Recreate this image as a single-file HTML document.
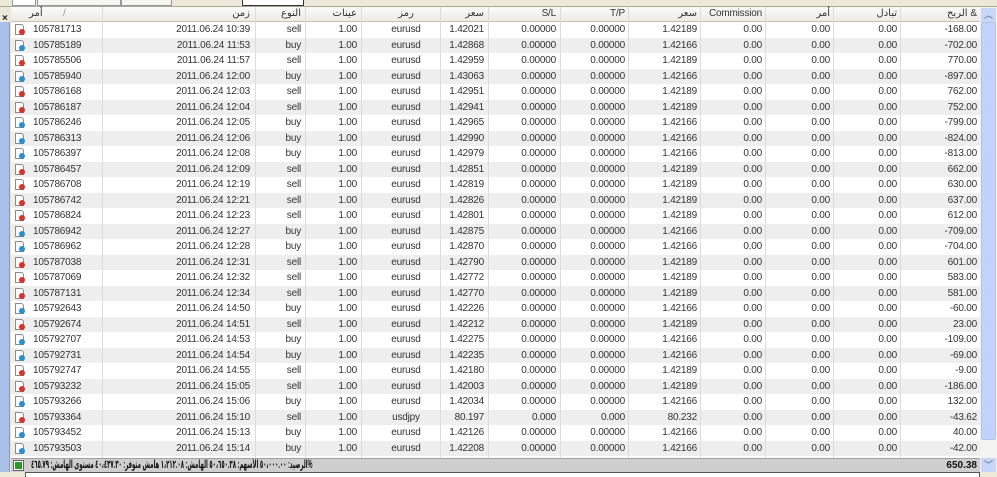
<!DOCTYPE html>
<html><head><meta charset="utf-8">
<style>
*{margin:0;padding:0;box-sizing:border-box}
body{width:997px;height:477px;overflow:hidden;background:#ece9d8;font-family:"Liberation Sans","DejaVu Sans",sans-serif;font-size:10px;color:#333;position:relative}
.top{position:absolute;left:0;top:0;width:997px;height:7px;background:#ece9d8;border-bottom:1px solid #aca899}
.tab{position:absolute;top:0;height:6px;border:1px solid #919b9c;border-top:none;background:#f7f6f0}
.side{position:absolute;left:0;top:7px;width:11px;height:465px;background:#ece9d8}
.bar{position:absolute;left:0;top:22px;width:10px;height:450px;background:#a9c0e8;border-right:1px solid #7f9db9}
.x{position:absolute;left:2px;top:6px;font-size:10px;font-weight:bold;color:#222}
.hdr{position:absolute;left:11px;top:7px;width:969px;height:15px;background:linear-gradient(#fbfbf8,#ecebe4);border-bottom:1px solid #c5c2b2}
.grid{position:absolute;left:11px;top:22px;width:969px;height:436px;background:#fff;overflow:hidden}
.r{position:absolute;left:0;width:969px;height:15.5px}
.r.g{background:#eeeeee}
.r span,.hdr span{position:absolute;top:2px;white-space:nowrap;line-height:12px;letter-spacing:-0.2px}
.hdr span{top:1px}
.vl{position:absolute;top:7px;width:1px;height:451px;background:#dcdcdc}
.a{left:22px}
.c1{right:730px}.c2{right:679px}.c3{right:623px}.c4{left:380px;width:30px;text-align:center}
.c5{right:496px}.c6{right:424px}.c7{right:355px}.c8{right:283px}.c9{right:218px}.c10{right:150px}.c11{right:83px}.c12{right:3px}
.ic{position:absolute;left:4px;top:2px;width:9px;height:11px;border:1px solid #8a8a8a;background:#fff;border-radius:0 3px 0 0}
.ic i{position:absolute;left:3px;top:4px;width:6px;height:6px;border-radius:50%}
.s i{background:#d8322a}.b i{background:#2b8fcf}
.sb{position:absolute;left:980px;top:7px;width:17px;height:465px;background:#f3f3ef}
.th{position:absolute;left:981px;top:22px;width:15px;height:418px;background:#c1d3fb;border:1px solid #b0c4ee;border-radius:2px}
.ar{position:absolute;left:981px;width:15px;height:14px;background:#c8d7f8;color:#4d6185;font-size:9px;text-align:center;line-height:14px}
.sum{position:absolute;left:11px;top:458px;width:969px;height:14px;background:#cfcfcf;border-top:1px solid #a0a0a0;font-weight:bold;color:#111}
.bot{position:absolute;left:25px;top:472px;width:955px;height:5px;background:#fff;border:1px solid #555;border-bottom:none}
</style></head><body>
<div class="top">
<div class="tab" style="left:12px;width:24px;background:#fff"></div>
<div class="tab" style="left:37px;width:84px"></div>
<div class="tab" style="left:121px;width:51px"></div>
<div class="tab" style="left:242px;width:62px;background:#fff;border-color:#333"></div>
</div>
<div class="side"><div class="x">×</div></div>
<div class="bar"></div>
<div class="grid">
<div class="r"><div class="ic s"><i></i></div><span class="a">105781713</span><span class="c1">2011.06.24 10:39</span><span class="c2">sell</span><span class="c3">1.00</span><span class="c4">eurusd</span><span class="c5">1.42021</span><span class="c6">0.00000</span><span class="c7">0.00000</span><span class="c8">1.42189</span><span class="c9">0.00</span><span class="c10">0.00</span><span class="c11">0.00</span><span class="c12">-168.00</span></div>
<div class="r g" style="top:15.5px"><div class="ic b"><i></i></div><span class="a">105785189</span><span class="c1">2011.06.24 11:53</span><span class="c2">buy</span><span class="c3">1.00</span><span class="c4">eurusd</span><span class="c5">1.42868</span><span class="c6">0.00000</span><span class="c7">0.00000</span><span class="c8">1.42166</span><span class="c9">0.00</span><span class="c10">0.00</span><span class="c11">0.00</span><span class="c12">-702.00</span></div>
<div class="r" style="top:31px"><div class="ic s"><i></i></div><span class="a">105785506</span><span class="c1">2011.06.24 11:57</span><span class="c2">sell</span><span class="c3">1.00</span><span class="c4">eurusd</span><span class="c5">1.42959</span><span class="c6">0.00000</span><span class="c7">0.00000</span><span class="c8">1.42189</span><span class="c9">0.00</span><span class="c10">0.00</span><span class="c11">0.00</span><span class="c12">770.00</span></div>
<div class="r g" style="top:46.5px"><div class="ic b"><i></i></div><span class="a">105785940</span><span class="c1">2011.06.24 12:00</span><span class="c2">buy</span><span class="c3">1.00</span><span class="c4">eurusd</span><span class="c5">1.43063</span><span class="c6">0.00000</span><span class="c7">0.00000</span><span class="c8">1.42166</span><span class="c9">0.00</span><span class="c10">0.00</span><span class="c11">0.00</span><span class="c12">-897.00</span></div>
<div class="r" style="top:62px"><div class="ic s"><i></i></div><span class="a">105786168</span><span class="c1">2011.06.24 12:03</span><span class="c2">sell</span><span class="c3">1.00</span><span class="c4">eurusd</span><span class="c5">1.42951</span><span class="c6">0.00000</span><span class="c7">0.00000</span><span class="c8">1.42189</span><span class="c9">0.00</span><span class="c10">0.00</span><span class="c11">0.00</span><span class="c12">762.00</span></div>
<div class="r g" style="top:77.5px"><div class="ic s"><i></i></div><span class="a">105786187</span><span class="c1">2011.06.24 12:04</span><span class="c2">sell</span><span class="c3">1.00</span><span class="c4">eurusd</span><span class="c5">1.42941</span><span class="c6">0.00000</span><span class="c7">0.00000</span><span class="c8">1.42189</span><span class="c9">0.00</span><span class="c10">0.00</span><span class="c11">0.00</span><span class="c12">752.00</span></div>
<div class="r" style="top:93px"><div class="ic b"><i></i></div><span class="a">105786246</span><span class="c1">2011.06.24 12:05</span><span class="c2">buy</span><span class="c3">1.00</span><span class="c4">eurusd</span><span class="c5">1.42965</span><span class="c6">0.00000</span><span class="c7">0.00000</span><span class="c8">1.42166</span><span class="c9">0.00</span><span class="c10">0.00</span><span class="c11">0.00</span><span class="c12">-799.00</span></div>
<div class="r g" style="top:108.5px"><div class="ic b"><i></i></div><span class="a">105786313</span><span class="c1">2011.06.24 12:06</span><span class="c2">buy</span><span class="c3">1.00</span><span class="c4">eurusd</span><span class="c5">1.42990</span><span class="c6">0.00000</span><span class="c7">0.00000</span><span class="c8">1.42166</span><span class="c9">0.00</span><span class="c10">0.00</span><span class="c11">0.00</span><span class="c12">-824.00</span></div>
<div class="r" style="top:124px"><div class="ic b"><i></i></div><span class="a">105786397</span><span class="c1">2011.06.24 12:08</span><span class="c2">buy</span><span class="c3">1.00</span><span class="c4">eurusd</span><span class="c5">1.42979</span><span class="c6">0.00000</span><span class="c7">0.00000</span><span class="c8">1.42166</span><span class="c9">0.00</span><span class="c10">0.00</span><span class="c11">0.00</span><span class="c12">-813.00</span></div>
<div class="r g" style="top:139.5px"><div class="ic s"><i></i></div><span class="a">105786457</span><span class="c1">2011.06.24 12:09</span><span class="c2">sell</span><span class="c3">1.00</span><span class="c4">eurusd</span><span class="c5">1.42851</span><span class="c6">0.00000</span><span class="c7">0.00000</span><span class="c8">1.42189</span><span class="c9">0.00</span><span class="c10">0.00</span><span class="c11">0.00</span><span class="c12">662.00</span></div>
<div class="r" style="top:155px"><div class="ic s"><i></i></div><span class="a">105786708</span><span class="c1">2011.06.24 12:19</span><span class="c2">sell</span><span class="c3">1.00</span><span class="c4">eurusd</span><span class="c5">1.42819</span><span class="c6">0.00000</span><span class="c7">0.00000</span><span class="c8">1.42189</span><span class="c9">0.00</span><span class="c10">0.00</span><span class="c11">0.00</span><span class="c12">630.00</span></div>
<div class="r g" style="top:170.5px"><div class="ic s"><i></i></div><span class="a">105786742</span><span class="c1">2011.06.24 12:21</span><span class="c2">sell</span><span class="c3">1.00</span><span class="c4">eurusd</span><span class="c5">1.42826</span><span class="c6">0.00000</span><span class="c7">0.00000</span><span class="c8">1.42189</span><span class="c9">0.00</span><span class="c10">0.00</span><span class="c11">0.00</span><span class="c12">637.00</span></div>
<div class="r" style="top:186px"><div class="ic s"><i></i></div><span class="a">105786824</span><span class="c1">2011.06.24 12:23</span><span class="c2">sell</span><span class="c3">1.00</span><span class="c4">eurusd</span><span class="c5">1.42801</span><span class="c6">0.00000</span><span class="c7">0.00000</span><span class="c8">1.42189</span><span class="c9">0.00</span><span class="c10">0.00</span><span class="c11">0.00</span><span class="c12">612.00</span></div>
<div class="r g" style="top:201.5px"><div class="ic b"><i></i></div><span class="a">105786942</span><span class="c1">2011.06.24 12:27</span><span class="c2">buy</span><span class="c3">1.00</span><span class="c4">eurusd</span><span class="c5">1.42875</span><span class="c6">0.00000</span><span class="c7">0.00000</span><span class="c8">1.42166</span><span class="c9">0.00</span><span class="c10">0.00</span><span class="c11">0.00</span><span class="c12">-709.00</span></div>
<div class="r" style="top:217px"><div class="ic b"><i></i></div><span class="a">105786962</span><span class="c1">2011.06.24 12:28</span><span class="c2">buy</span><span class="c3">1.00</span><span class="c4">eurusd</span><span class="c5">1.42870</span><span class="c6">0.00000</span><span class="c7">0.00000</span><span class="c8">1.42166</span><span class="c9">0.00</span><span class="c10">0.00</span><span class="c11">0.00</span><span class="c12">-704.00</span></div>
<div class="r g" style="top:232.5px"><div class="ic s"><i></i></div><span class="a">105787038</span><span class="c1">2011.06.24 12:31</span><span class="c2">sell</span><span class="c3">1.00</span><span class="c4">eurusd</span><span class="c5">1.42790</span><span class="c6">0.00000</span><span class="c7">0.00000</span><span class="c8">1.42189</span><span class="c9">0.00</span><span class="c10">0.00</span><span class="c11">0.00</span><span class="c12">601.00</span></div>
<div class="r" style="top:248px"><div class="ic s"><i></i></div><span class="a">105787069</span><span class="c1">2011.06.24 12:32</span><span class="c2">sell</span><span class="c3">1.00</span><span class="c4">eurusd</span><span class="c5">1.42772</span><span class="c6">0.00000</span><span class="c7">0.00000</span><span class="c8">1.42189</span><span class="c9">0.00</span><span class="c10">0.00</span><span class="c11">0.00</span><span class="c12">583.00</span></div>
<div class="r g" style="top:263.5px"><div class="ic s"><i></i></div><span class="a">105787131</span><span class="c1">2011.06.24 12:34</span><span class="c2">sell</span><span class="c3">1.00</span><span class="c4">eurusd</span><span class="c5">1.42770</span><span class="c6">0.00000</span><span class="c7">0.00000</span><span class="c8">1.42189</span><span class="c9">0.00</span><span class="c10">0.00</span><span class="c11">0.00</span><span class="c12">581.00</span></div>
<div class="r" style="top:279px"><div class="ic b"><i></i></div><span class="a">105792643</span><span class="c1">2011.06.24 14:50</span><span class="c2">buy</span><span class="c3">1.00</span><span class="c4">eurusd</span><span class="c5">1.42226</span><span class="c6">0.00000</span><span class="c7">0.00000</span><span class="c8">1.42166</span><span class="c9">0.00</span><span class="c10">0.00</span><span class="c11">0.00</span><span class="c12">-60.00</span></div>
<div class="r g" style="top:294.5px"><div class="ic s"><i></i></div><span class="a">105792674</span><span class="c1">2011.06.24 14:51</span><span class="c2">sell</span><span class="c3">1.00</span><span class="c4">eurusd</span><span class="c5">1.42212</span><span class="c6">0.00000</span><span class="c7">0.00000</span><span class="c8">1.42189</span><span class="c9">0.00</span><span class="c10">0.00</span><span class="c11">0.00</span><span class="c12">23.00</span></div>
<div class="r" style="top:310px"><div class="ic b"><i></i></div><span class="a">105792707</span><span class="c1">2011.06.24 14:53</span><span class="c2">buy</span><span class="c3">1.00</span><span class="c4">eurusd</span><span class="c5">1.42275</span><span class="c6">0.00000</span><span class="c7">0.00000</span><span class="c8">1.42166</span><span class="c9">0.00</span><span class="c10">0.00</span><span class="c11">0.00</span><span class="c12">-109.00</span></div>
<div class="r g" style="top:325.5px"><div class="ic b"><i></i></div><span class="a">105792731</span><span class="c1">2011.06.24 14:54</span><span class="c2">buy</span><span class="c3">1.00</span><span class="c4">eurusd</span><span class="c5">1.42235</span><span class="c6">0.00000</span><span class="c7">0.00000</span><span class="c8">1.42166</span><span class="c9">0.00</span><span class="c10">0.00</span><span class="c11">0.00</span><span class="c12">-69.00</span></div>
<div class="r" style="top:341px"><div class="ic s"><i></i></div><span class="a">105792747</span><span class="c1">2011.06.24 14:55</span><span class="c2">sell</span><span class="c3">1.00</span><span class="c4">eurusd</span><span class="c5">1.42180</span><span class="c6">0.00000</span><span class="c7">0.00000</span><span class="c8">1.42189</span><span class="c9">0.00</span><span class="c10">0.00</span><span class="c11">0.00</span><span class="c12">-9.00</span></div>
<div class="r g" style="top:356.5px"><div class="ic s"><i></i></div><span class="a">105793232</span><span class="c1">2011.06.24 15:05</span><span class="c2">sell</span><span class="c3">1.00</span><span class="c4">eurusd</span><span class="c5">1.42003</span><span class="c6">0.00000</span><span class="c7">0.00000</span><span class="c8">1.42189</span><span class="c9">0.00</span><span class="c10">0.00</span><span class="c11">0.00</span><span class="c12">-186.00</span></div>
<div class="r" style="top:372px"><div class="ic b"><i></i></div><span class="a">105793266</span><span class="c1">2011.06.24 15:06</span><span class="c2">buy</span><span class="c3">1.00</span><span class="c4">eurusd</span><span class="c5">1.42034</span><span class="c6">0.00000</span><span class="c7">0.00000</span><span class="c8">1.42166</span><span class="c9">0.00</span><span class="c10">0.00</span><span class="c11">0.00</span><span class="c12">132.00</span></div>
<div class="r g" style="top:387.5px"><div class="ic s"><i></i></div><span class="a">105793364</span><span class="c1">2011.06.24 15:10</span><span class="c2">sell</span><span class="c3">1.00</span><span class="c4">usdjpy</span><span class="c5">80.197</span><span class="c6">0.000</span><span class="c7">0.000</span><span class="c8">80.232</span><span class="c9">0.00</span><span class="c10">0.00</span><span class="c11">0.00</span><span class="c12">-43.62</span></div>
<div class="r" style="top:403px"><div class="ic b"><i></i></div><span class="a">105793452</span><span class="c1">2011.06.24 15:13</span><span class="c2">buy</span><span class="c3">1.00</span><span class="c4">eurusd</span><span class="c5">1.42126</span><span class="c6">0.00000</span><span class="c7">0.00000</span><span class="c8">1.42166</span><span class="c9">0.00</span><span class="c10">0.00</span><span class="c11">0.00</span><span class="c12">40.00</span></div>
<div class="r g" style="top:418.5px"><div class="ic b"><i></i></div><span class="a">105793503</span><span class="c1">2011.06.24 15:14</span><span class="c2">buy</span><span class="c3">1.00</span><span class="c4">eurusd</span><span class="c5">1.42208</span><span class="c6">0.00000</span><span class="c7">0.00000</span><span class="c8">1.42166</span><span class="c9">0.00</span><span class="c10">0.00</span><span class="c11">0.00</span><span class="c12">-42.00</span></div>
</div>
<div class="hdr"><span style="left:52px;color:#999">/</span><span style="left:18px">أمر</span><span class="c1">زمن</span><span class="c2">النوع</span><span class="c3">عينات</span><span class="c4">رمز</span><span class="c5">سعر</span><span class="c6">S/L</span><span class="c7">T/P</span><span class="c8">سعر</span><span class="c9">Commission</span><span class="c10">أمر</span><span class="c11">تبادل</span><span style="right:3px">الربح &amp;</span></div>
<div class="vl" style="left:102px"></div><div class="vl" style="left:255px"></div><div class="vl" style="left:305px"></div><div class="vl" style="left:361px"></div><div class="vl" style="left:440px"></div><div class="vl" style="left:488px"></div><div class="vl" style="left:560px"></div><div class="vl" style="left:628px"></div><div class="vl" style="left:700px"></div><div class="vl" style="left:765px"></div><div class="vl" style="left:833px"></div><div class="vl" style="left:900px"></div>
<div class="sb"></div><div class="th"></div>
<div class="ar" style="top:8px">︿</div><div class="ar" style="top:458px">﹀</div>
<div class="sum"><div style="position:absolute;left:3px;top:2px;width:9px;height:9px;background:#2a9a2a;border:1px solid #fff;outline:1px solid #666"></div><div style="position:absolute;left:20px;top:0;width:300px;height:13px;overflow:hidden"><span style="position:absolute;left:0;top:0;direction:rtl;font-size:11.5px;line-height:13px;white-space:nowrap;transform:scaleX(0.47);transform-origin:left top">%الرصيد: ٥٠،٠٠٠.٠٠ الأسهم: ٥٠،٦٥٠.٣٨ الهامش: ١،٢١٢.٠٨ هامش متوفر: ٤٠،٤٣٧.٣٠ مستوى الهامش: ٤٦٥.٧٩</span></div><span style="position:absolute;right:3px;top:1px">650.38</span></div>
<div class="bot"></div>
</body></html>
